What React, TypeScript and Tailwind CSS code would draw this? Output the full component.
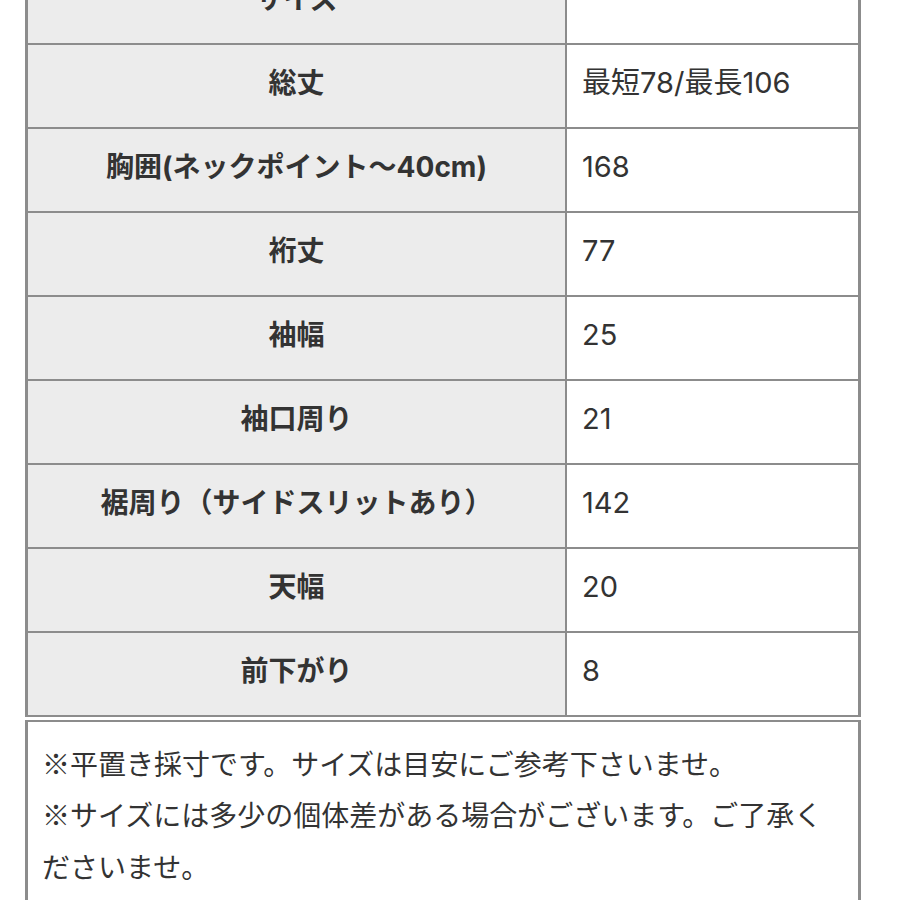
const rows: [string, string][] = [
  ['サイズ', ''],
  ['総丈', '最短78/最長106'],
  ['胸囲(ネックポイント～40cm)', '168'],
  ['裄丈', '77'],
  ['袖幅', '25'],
  ['袖口周り', '21'],
  ['裾周り（サイドスリットあり）', '142'],
  ['天幅', '20'],
  ['前下がり', '8'],
]

export default function App() {
  return (
    <div className="w-[900px] h-[900px] overflow-hidden bg-white text-[#333]">
      <div className="ml-[25px] w-[836px] -mt-[39px]">
        <div
          className="border-l-[3px] border-r-[3px] border-[#8c8c8c]"
          style={{ fontFamily: 'Inter, "Noto Sans CJK JP", sans-serif' }}
        >
          {rows.map(([label, value]) => (
            <div key={label} className="flex h-[84px] border-b-2 border-[#8c8c8c]">
              <div className="w-[539px] flex items-center justify-center bg-[#ececec] border-r-2 border-[#8c8c8c] text-[28px] font-bold pb-[6px]">
                {label}
              </div>
              <div className="flex-1 flex items-center pl-[15px] text-[29px] pb-[6px]">{value}</div>
            </div>
          ))}
        </div>
        <div
          className="mt-[3px] border-[3px] border-b-0 border-[#8c8c8c] border-t-2 px-[14px] pt-[17px] h-[300px]"
          style={{ fontFamily: '"Noto Sans CJK JP", sans-serif' }}
        >
          <p className="text-[28px] leading-[49px]">
            ※平置き採寸です。サイズは目安にご参考下さいませ。
          </p>
          <p className="text-[28px] leading-[52px]">
            ※サイズには多少の個体差がある場合がございます。ご了承くださいませ。
          </p>
        </div>
      </div>
    </div>
  )
}
